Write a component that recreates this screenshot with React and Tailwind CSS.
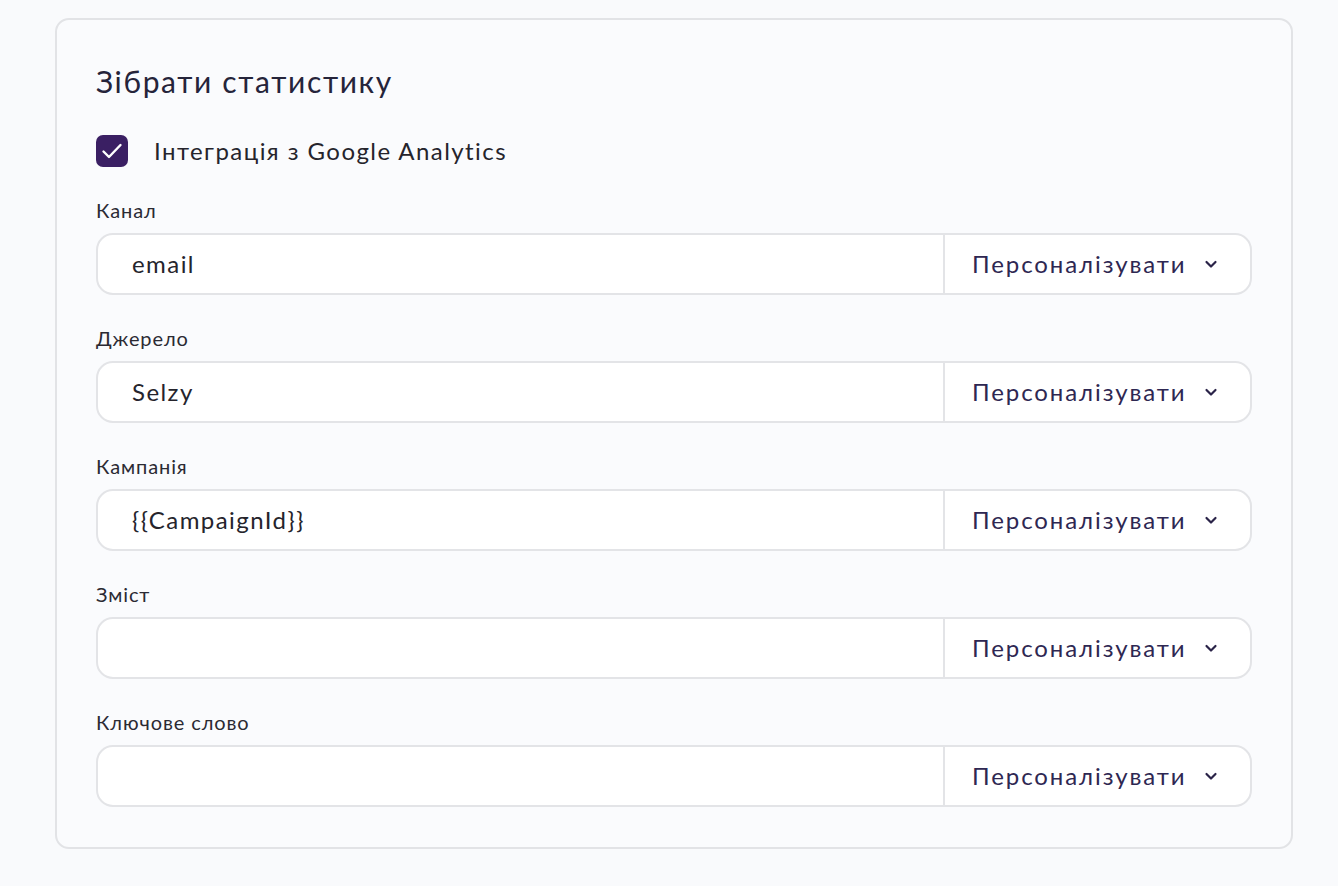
import React, { useState } from 'react';

const fields = [
  { label: 'Канал', value: 'email' },
  { label: 'Джерело', value: 'Selzy' },
  { label: 'Кампанія', value: '{{CampaignId}}' },
  { label: 'Зміст', value: '' },
  { label: 'Ключове слово', value: '' },
];

const Chevron = () => (
  <svg width="16" height="16" viewBox="0 0 16 16" fill="none">
    <path d="M3.5 6l4.5 4.5L12.5 6" stroke="#2a2348" strokeWidth="2.2" strokeLinecap="round" strokeLinejoin="round" />
  </svg>
);

const UtmField = ({ label, value }) => {
  const [text, setText] = useState(value);
  return (
    <div className="flex flex-col">
      <label className="text-[20px] leading-[26px] tracking-[0.045em] text-[#2b2a33] mb-[10px]">{label}</label>
      <div className="flex h-[62px] rounded-[17px] border-2 border-[#e3e4e7] bg-white overflow-hidden">
        <input
          type="text"
          value={text}
          onChange={(e) => setText(e.target.value)}
          className="flex-1 min-w-0 px-[34px] text-[24px] tracking-[0.06em] text-[#25242c] bg-transparent outline-none"
        />
        <button className="flex items-center gap-[16px] border-l-2 border-[#e3e4e7] w-[307px] pl-[27px] text-[24px] tracking-[0.08em] text-[#2e2752]">
          Персоналізувати
          <Chevron />
        </button>
      </div>
    </div>
  );
};

export default function App() {
  const [checked, setChecked] = useState(true);
  return (
    <div className="min-h-screen bg-[#f9fafc] pt-[18px] pl-[55px] pr-[45px]" style={{ fontFamily: 'Lato, "Noto Sans", sans-serif' }}>
      <div className="w-[1238px] rounded-[14px] border-2 border-[#e2e3e6] bg-[#fafbfd] px-[39px] pt-[41px] pb-[40px]">
        <h2 className="text-[30px] leading-[40px] tracking-[0.055em] text-[#25243a]">Зібрати статистику</h2>
        <label className="mt-[32px] flex items-center gap-[26px] cursor-pointer">
          <span
            onClick={() => setChecked(!checked)}
            className={`flex h-[32px] w-[32px] items-center justify-center rounded-[7px] ${checked ? 'bg-[#3a1f63]' : 'bg-white border-2 border-[#d0d0d6]'}`}
          >
            {checked && (
              <svg width="32" height="32" viewBox="0 0 32 32" fill="none">
                <path d="M7.5 16.5l5.5 5.5L24.5 10" stroke="white" strokeWidth="2.4" strokeLinecap="round" strokeLinejoin="round" />
              </svg>
            )}
          </span>
          <span className="text-[24px] tracking-[0.06em] text-[#25242c]">Інтеграція з Google Analytics</span>
        </label>
        <div className="mt-[28px] flex flex-col gap-[30px]">
          {fields.map((f) => (
            <UtmField key={f.label} label={f.label} value={f.value} />
          ))}
        </div>
      </div>
    </div>
  );
}
